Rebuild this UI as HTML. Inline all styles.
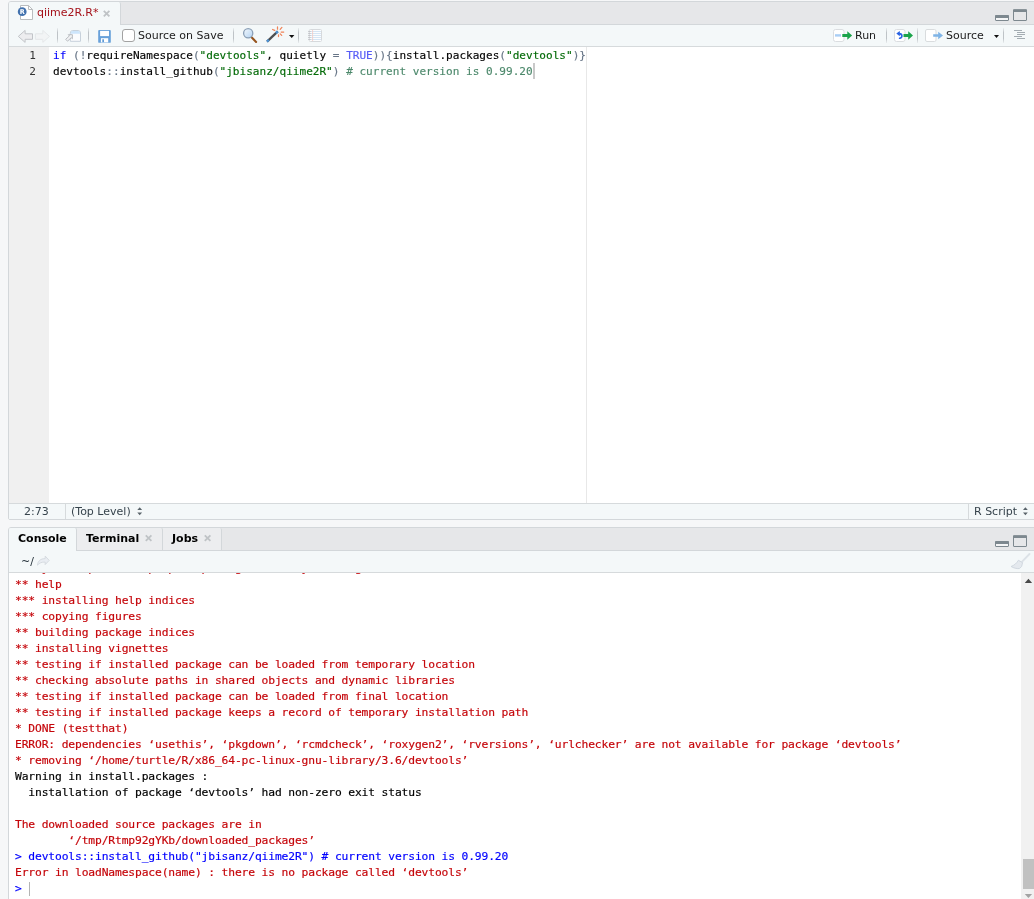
<!DOCTYPE html>
<html lang="en">
<head>
<meta charset="utf-8">
<title>RStudio</title>
<style>
*{box-sizing:border-box;margin:0;padding:0}
html,body{width:1034px;height:899px;overflow:hidden;background:#f6f7f8}
body{position:relative;font-family:"DejaVu Sans","Liberation Sans",sans-serif;font-size:11px;color:#1b1b1b}
.abs{position:absolute}
.o,.cl,.ln,.t{will-change:transform}
.pane{position:absolute;left:8px;width:1040px;border:1px solid #d3d7da;border-radius:3px 0 0 2px;background:#fff;overflow:hidden}
#src{top:1px;height:519px}
#con{top:527px;height:390px}
.tabbar{position:absolute;left:0;right:0;top:0;height:23px;background:#e6e7e9;border-bottom:1px solid #d3d7da}
.toolbar{position:absolute;left:0;right:0;top:23px;height:22px;background:#f4f8f9;border-bottom:1px solid #d6dadc}
.tab{position:absolute;top:0;height:23px;background:#f4f8f9;border-right:1px solid #d3d7da;border-radius:0 2px 0 0}
.sep{position:absolute;top:3px;width:1px;height:15px;background:linear-gradient(rgba(190,195,199,.2),#bec3c7 30%,#bec3c7 70%,rgba(190,195,199,.2))}
svg{position:absolute;overflow:visible}
.mono{font-family:"DejaVu Sans Mono","Liberation Mono",monospace}
#editor{position:absolute;left:0;top:45px;width:1040px;height:456px;background:#fff}
#gutter{position:absolute;left:0;top:0;width:40px;height:456px;background:#f0f0f0}
.ln{position:absolute;left:0;width:27px;text-align:right;font-size:11.073px;line-height:16px;color:#333;height:16px}
.cl{position:absolute;left:44px;font-size:11.073px;-webkit-text-stroke:.15px;line-height:16px;height:16px;white-space:pre;color:#000}
.k{color:#0000ff}.p{color:#687687}.s{color:#036a07}.c{color:#585cf6}.cm{color:#4c886b}
#status{position:absolute;left:0;top:501px;width:1040px;height:16px;background:#f4f8f9;border-top:1px solid #d6dadc}
#ctext{position:absolute;left:0;top:45px;width:1012px;height:345px;background:#fff;overflow:hidden}
.o{position:absolute;left:6px;height:16px;line-height:16px;font-size:11.3px;letter-spacing:-.1365px;white-space:pre;color:#c5060b;-webkit-text-stroke:.18px}
.o.b{color:#000}.o.i{color:#0000ff}
</style>
</head>
<body>

<div class="pane" id="src">
  <div class="tabbar">
    <div class="tab" style="left:0;width:112px">
      <span class="abs t" style="left:28px;top:3px;line-height:15px;color:#a5121b;white-space:pre">qiime2R.R*</span>
    </div>
  </div>
  <div class="toolbar">
    <span class="sep" style="left:48px"></span>
    <span class="sep" style="left:79px"></span>
    <span class="abs" style="left:113px;top:4px;width:13px;height:13px;border:1px solid #a2a2a2;border-radius:3px;background:#fff"></span>
    <span class="abs t" style="left:129px;top:3px;line-height:15px;white-space:pre">Source on Save</span>
    <span class="sep" style="left:224px"></span>
    <span class="sep" style="left:289px"></span>
    <span class="abs t" style="left:846px;top:3px;line-height:15px">Run</span>
    <span class="sep" style="left:877px"></span>
    <span class="sep" style="left:908px"></span>
    <span class="abs t" style="left:937px;top:3px;line-height:15px">Source</span>
    <span class="sep" style="left:994px"></span>
  </div>
  <div id="editor">
    <div id="gutter"></div>
    <div class="ln mono" style="top:1px">1</div>
    <div class="ln mono" style="top:17px">2</div>
    <div class="cl mono" style="top:1px"><span class="k">if</span> <span class="p">(!</span>requireNamespace<span class="p">(</span><span class="s">"devtools"</span>, quietly <span class="p">=</span> <span class="c">TRUE</span><span class="p">)){</span>install.packages<span class="p">(</span><span class="s">"devtools"</span><span class="p">)}</span></div>
    <div class="cl mono" style="top:17px">devtools<span class="p">::</span>install_github<span class="p">(</span><span class="s">"jbisanz/qiime2R"</span><span class="p">)</span> <span class="cm"># current version is 0.99.20</span></div>
    <span class="abs" style="left:524px;top:16px;width:2px;height:16px;background:#c9c9c9"></span>
    <span class="abs" style="left:577px;top:0;width:1px;height:456px;background:#e8e8e8"></span>
  </div>
  <div id="status">
    <span class="abs t" style="left:15px;top:1px;line-height:14px;color:#36434c">2:73</span>
    <span class="abs" style="left:56px;top:0;width:1px;height:15px;background:#d6dadc"></span>
    <span class="abs t" style="left:62px;top:1px;line-height:14px;color:#36434c;white-space:pre">(Top Level)</span>
    <span class="abs" style="left:959px;top:0;width:1px;height:15px;background:#d6dadc"></span>
    <span class="abs t" style="left:965px;top:1px;line-height:14px;color:#36434c;white-space:pre">R Script</span>
  </div>
</div>

<div class="pane" id="con">
  <div class="tabbar" style="height:23px">
    <div class="tab" style="left:0;width:68px"><span class="abs t" style="left:9px;top:3px;line-height:15px;font-weight:bold;color:#000">Console</span></div>
    <div class="tab" style="left:68px;width:86px;height:22px;background:#ecedef"><span class="abs t" style="left:9px;top:3px;line-height:15px;font-weight:bold;color:#000">Terminal</span></div>
    <div class="tab" style="left:154px;width:59px;height:22px;background:#ecedef"><span class="abs t" style="left:9px;top:3px;line-height:15px;font-weight:bold;color:#000">Jobs</span></div>
  </div>
  <div class="toolbar">
    <span class="abs t" style="left:12px;top:3px;line-height:15px;color:#1e2a33">~/</span>
  </div>
  <div id="ctext" class="mono">
<div class="o" style="top:-12px">** byte-compile and prepare package for lazy loading</div>
<div class="o" style="top:4px">** help</div>
<div class="o" style="top:20px">*** installing help indices</div>
<div class="o" style="top:36px">*** copying figures</div>
<div class="o" style="top:52px">** building package indices</div>
<div class="o" style="top:68px">** installing vignettes</div>
<div class="o" style="top:84px">** testing if installed package can be loaded from temporary location</div>
<div class="o" style="top:100px">** checking absolute paths in shared objects and dynamic libraries</div>
<div class="o" style="top:116px">** testing if installed package can be loaded from final location</div>
<div class="o" style="top:132px">** testing if installed package keeps a record of temporary installation path</div>
<div class="o" style="top:148px">* DONE (testthat)</div>
<div class="o" style="top:164px">ERROR: dependencies ‘usethis’, ‘pkgdown’, ‘rcmdcheck’, ‘roxygen2’, ‘rversions’, ‘urlchecker’ are not available for package ‘devtools’</div>
<div class="o" style="top:180px">* removing ‘/home/turtle/R/x86_64-pc-linux-gnu-library/3.6/devtools’</div>
<div class="o b" style="top:196px">Warning in install.packages :</div>
<div class="o b" style="top:212px">  installation of package ‘devtools’ had non-zero exit status</div>
<div class="o" style="top:244px">The downloaded source packages are in</div>
<div class="o" style="top:260px">        ‘/tmp/Rtmp92gYKb/downloaded_packages’</div>
<div class="o i" style="top:276px">&gt; devtools::install_github("jbisanz/qiime2R") # current version is 0.99.20</div>
<div class="o" style="top:292px">Error in loadNamespace(name) : there is no package called ‘devtools’</div>
<div class="o i" style="top:308px">&gt; </div>
<span class="abs" style="left:20px;top:309px;width:1px;height:14px;background:#b4b4b4"></span>
  </div>
</div>

<svg id="ov" width="1034" height="899" viewBox="0 0 1034 899" style="left:0;top:0;pointer-events:none">
<defs>
<linearGradient id="lens" x1="0" y1="0" x2="1" y2="1"><stop offset="0" stop-color="#f3f8fd"/><stop offset="1" stop-color="#b3d2f1"/></linearGradient>
</defs>
<!-- file icon -->
<g id="ic-file">
<path d="M20.500 5.500h8l4 4v10h-12z" fill="#fff" stroke="#b2b5b8" stroke-width=".9"/>
<path d="M28.500 5.500v4h4" fill="none" stroke="#b2b5b8" stroke-width=".9"/>
<circle cx="22.2" cy="11.7" r="4.4" fill="#4272ae"/>
<text x="22.3" y="14.1" font-family="DejaVu Sans, Liberation Sans, sans-serif" font-weight="bold" font-size="6.5" fill="#fff" text-anchor="middle">R</text>
</g>
<!-- tab close -->
<path d="M103.8 10.8l5.6 5.6M109.4 10.8l-5.6 5.6" stroke="#bfc3c6" stroke-width="1.8" fill="none"/>
<!-- back / forward arrows -->
<path d="M18.300 36.400L25.100 30.400V33.800H32.500V39.300H25.100V42.400Z" fill="#ededef" stroke="#c1c4c8" stroke-width="1" stroke-linejoin="round"/>
<path d="M49.500 36.400L42.800 30.400V33.800H35.400V39.300H42.800V42.400Z" fill="#f2f4f5" stroke="#e4e7e9" stroke-width="1" stroke-linejoin="round"/>
<!-- popout -->
<g id="ic-pop">
<path d="M70.300 41.300v-8.300a2.500 2.500 0 0 1 2.500-2.500h5.200a2.500 2.500 0 0 1 2.500 2.500v8.300z" fill="#fafbfd" stroke="#c7d1db" stroke-width="1"/>
<path d="M70.800 33.700v-.8a2 2 0 0 1 2-2h5.200a2 2 0 0 1 2 2v.8z" fill="#cde5fb"/>
<path d="M65.700 39.300l3.700-3.400-1.100-1.200h4.100v4.100l-1.200-1.100-3.700 3.500z" fill="#f1f2f4" stroke="#abafb4" stroke-width=".8" stroke-linejoin="round"/>
</g>
<!-- save -->
<g id="ic-save">
<rect x="98.200" y="30" width="12.600" height="12.800" rx=".9" fill="#68a1da"/>
<rect x="100.100" y="30.900" width="8.900" height="5.200" fill="#fff"/>
<rect x="100.900" y="38.200" width="7.300" height="4.200" fill="#fff"/>
<rect x="102.300" y="39.300" width="1.700" height="2.900" fill="#5f9ad6"/>
</g>
<!-- magnifier -->
<g id="ic-find">
<path d="M251.800 37.500l4.300 4.400" stroke="#96541f" stroke-width="2.100" stroke-linecap="round"/>
<circle cx="248.200" cy="33.300" r="4.600" fill="url(#lens)" stroke="#8a9fb6" stroke-width="1.300"/>
</g>
<!-- wand -->
<g id="ic-wand">
<path d="M267 41.600l10.800-10.200" stroke="#4c4f52" stroke-width="2.300"/>
<path d="M267 41.600l1.800-1.700M276 33.100l1.800-1.700" stroke="#4b93d6" stroke-width="2.300"/>
<path d="M272.600 29.500l2.100.9M277.500 26.900v2.300M280.200 29.300l1.700-1.900M281.200 32h2.500M280.200 33.900l1.500 1.500M278.500 34.900v1.700" stroke="#f08358" stroke-width="1.250" stroke-linecap="round"/>
</g>
<path d="M289 35h5.400l-2.700 3.100z" fill="#111"/>
<!-- notebook (disabled) -->
<g id="ic-nb">
<rect x="309.300" y="29.500" width="12.200" height="12" rx="1" fill="#fcfdfe" stroke="#d6d9dc" stroke-width="1"/>
<path d="M311 31.500h10M311 33.500h10M311 35.500h10M311 37.500h10M311 39.500h10" stroke="#d6e5f4" stroke-width="1"/>
<path d="M312.600 30v11" stroke="#f4c6c0" stroke-width=".8"/>
<path d="M308.200 31.500h2.600M308.200 33.500h2.600M308.200 35.500h2.600M308.200 37.500h2.600M308.200 39.500h2.600" stroke="#c3c6ca" stroke-width="1"/>
</g>
<!-- run -->
<g id="ic-run">
<rect x="833.500" y="29.500" width="10.500" height="12" rx="2" fill="#fff" stroke="#dadde0" stroke-width="1"/>
<rect x="835" y="34.200" width="6" height="2.400" fill="#a9cef5"/>
<path d="M842.300 34.100h5v-2.900l4.800 4.300-4.800 4.300v-2.900h-5z" fill="#1ba44b"/>
</g>
<!-- rerun -->
<g id="ic-rerun">
<rect x="894.500" y="29.500" width="10.500" height="12" rx="2" fill="#fff" stroke="#dadde0" stroke-width="1"/>
<path d="M899.600 38.300c3-.4 3.400-4.500-.6-4.700" fill="none" stroke="#2a63e3" stroke-width="1.600" stroke-linecap="round"/>
<path d="M896.300 33.600l3.500-2.700v5.400z" fill="#2a63e3"/>
<path d="M903.500 34.100h4.700v-2.900l4.800 4.300-4.800 4.300v-2.900h-4.700z" fill="#1ba44b"/>
</g>
<!-- source -->
<g id="ic-source">
<rect x="925.500" y="29.500" width="10.500" height="12" rx="1.500" fill="#fff" stroke="#d9dcde" stroke-width="1"/>
<path d="M933.200 34.200h5v-2.500l4.800 3.800-4.800 3.800v-2.500h-5z" fill="#7fb4e6"/>
</g>
<path d="M994 35h5l-2.500 3z" fill="#111"/>
<!-- outline -->
<path d="M1014 30.500h8M1017 32.500h8M1017 34.500h8M1014 36.500h8M1017 38.500h8" stroke="#a3acb2" stroke-width="1"/>
<!-- min / max (source) -->
<g id="mm1">
<rect x="995.500" y="16" width="13" height="4.500" rx=".4" fill="#f4f5f6" stroke="#7d888f" stroke-width="1"/>
<rect x="995" y="15" width="14" height="3" rx=".8" fill="#7d888f"/>
<rect x="1013.500" y="10" width="13" height="10.500" rx=".4" fill="#e6e7e9" stroke="#7d888f" stroke-width="1"/>
<rect x="1013" y="9.200" width="14" height="2.800" rx=".8" fill="#7d888f"/>
</g>
<use href="#mm1" y="526"/>
<!-- status bar spinners -->
<path id="ud" d="M137.300 510l2.400-2.800 2.400 2.800zM137.300 512.400l2.400 2.800 2.400-2.800z" fill="#5a646b"/>
<use href="#ud" x="885.700"/>
<!-- console tab close -->
<path d="M145.800 535.300l5.600 5.600M151.400 535.300l-5.600 5.600" stroke="#bfc3c6" stroke-width="1.800" fill="none"/>
<path d="M204.800 535.300l5.600 5.600M210.400 535.300l-5.600 5.600" stroke="#bfc3c6" stroke-width="1.800" fill="none"/>
<!-- console dir arrow -->
<path d="M37.500 565.200c.3-4.200 3-6.600 7.700-6.600v-2.500l4 4.300-4 4.200v-2.500c-3.500-.2-5.800.8-7.700 3.100z" fill="#e9edf2" stroke="#d3d8de" stroke-width=".9" stroke-linejoin="round"/>
<!-- broom -->
<g id="ic-broom">
<path d="M1029.500 554l-7.400 7.600" stroke="#dce2e7" stroke-width="1.900" stroke-linecap="round"/>
<path d="M1018.400 560.300l4.200 2.300-1 3.900-2.200 2.100c-3 .2-5.800-.6-8.300-2.100 3.300-1.300 5.600-3.300 7.300-6.200z" fill="#e4e9ee" stroke="#cdd5dc" stroke-width=".9" stroke-linejoin="round"/>
</g>
<!-- scrollbar -->
<rect x="1021" y="573" width="13" height="326" fill="#f1f1f1"/>
<path d="M1024.800 583l3.650-4.200 3.650 4.200z" fill="#484848"/>
<rect x="1023" y="859" width="11" height="30" fill="#c1c1c1"/>
<path d="M1024.800 893.900l3.650 4.200 3.650-4.200z" fill="#a3a3a3"/>
</svg>

</body>
</html>
